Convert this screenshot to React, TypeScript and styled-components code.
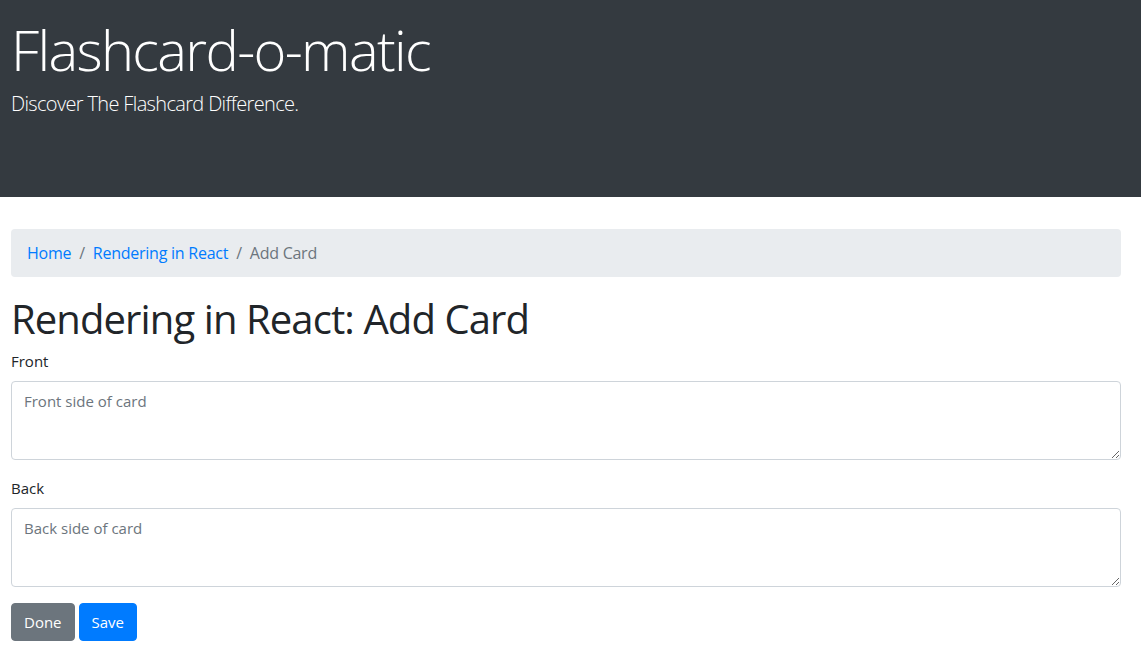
import React from "react";
import styled, { createGlobalStyle } from "styled-components";

const Global = createGlobalStyle`
  html, body { margin: 0; padding: 0; background: #fff; }
  body {
    font-family: "Open Sans", "Noto Sans", sans-serif;
    font-size: 16px;
    line-height: 1.5;
    color: #212529;
  }
  *, *::before, *::after { box-sizing: border-box; }
`;

const Jumbotron = styled.header`
  background: #343a40;
  color: #fff;
  height: 197px;
  padding: 16px 11px 0;
  margin-bottom: 32px;
`;

const Display = styled.h1`
  margin: 0 0 6px;
  font-size: 56px;
  font-weight: 300;
  line-height: 1.2;
  letter-spacing: -1.65px;
`;

const Lead = styled.p`
  margin: 0;
  font-size: 20px;
  font-weight: 300;
  line-height: 1.5;
  letter-spacing: -0.65px;
`;

const Main = styled.main`
  padding: 0 20px 0 11px;
`;

const Breadcrumb = styled.nav`
  display: flex;
  align-items: center;
  height: 48px;
  padding: 0 16px;
  background: #e9ecef;
  border-radius: 4px;
  margin-bottom: 16px;
  font-size: 16px;
  letter-spacing: -0.25px;
`;

const Crumb = styled.a<{ $active?: boolean }>`
  color: ${(p) => (p.$active ? "#6c757d" : "#007bff")};
  text-decoration: none;
`;

const Divider = styled.span`
  color: #6c757d;
  padding: 0 8px;
`;

const Title = styled.h2`
  margin: 0 0 6px;
  padding-top: 2px;
  font-size: 40px;
  font-weight: 400;
  line-height: 1.2;
  letter-spacing: -0.9px;
  color: #212529;
`;

const FormGroup = styled.div`
  margin-bottom: 16px;
`;

const Label = styled.label`
  display: block;
  margin-bottom: 8px;
  font-size: 15px;
  line-height: 24px;
`;

const TextArea = styled.textarea`
  display: block;
  width: 100%;
  height: 79px;
  padding: 8px 12px 6px;
  font-family: inherit;
  font-size: 15px;
  line-height: 1.5;
  color: #495057;
  border: 1px solid #ced4da;
  border-radius: 4px;
  resize: vertical;
  &::placeholder { color: #6c757d; opacity: 1; }
`;

const Buttons = styled.div`
  display: flex;
  gap: 4px;
`;

const Button = styled.button<{ $variant: "primary" | "secondary" }>`
  height: 38px;
  padding: 0 12px;
  font-family: inherit;
  font-size: 15px;
  line-height: 1.5;
  color: #fff;
  border: 1px solid ${(p) => (p.$variant === "primary" ? "#007bff" : "#6c757d")};
  background: ${(p) => (p.$variant === "primary" ? "#007bff" : "#6c757d")};
  border-radius: 4px;
  cursor: pointer;
`;

export default function App() {
  return (
    <>
      <Global />
      <Jumbotron>
        <Display>Flashcard-o-matic</Display>
        <Lead>Discover The Flashcard Difference.</Lead>
      </Jumbotron>
      <Main>
        <Breadcrumb>
          <Crumb href="#">Home</Crumb>
          <Divider>/</Divider>
          <Crumb href="#">Rendering in React</Crumb>
          <Divider>/</Divider>
          <Crumb $active>Add Card</Crumb>
        </Breadcrumb>
        <Title>Rendering in React: Add Card</Title>
        <form>
          <FormGroup>
            <Label htmlFor="front">Front</Label>
            <TextArea id="front" placeholder="Front side of card" />
          </FormGroup>
          <FormGroup>
            <Label htmlFor="back">Back</Label>
            <TextArea id="back" placeholder="Back side of card" />
          </FormGroup>
          <Buttons>
            <Button type="button" $variant="secondary">Done</Button>
            <Button type="submit" $variant="primary">Save</Button>
          </Buttons>
        </form>
      </Main>
    </>
  );
}
